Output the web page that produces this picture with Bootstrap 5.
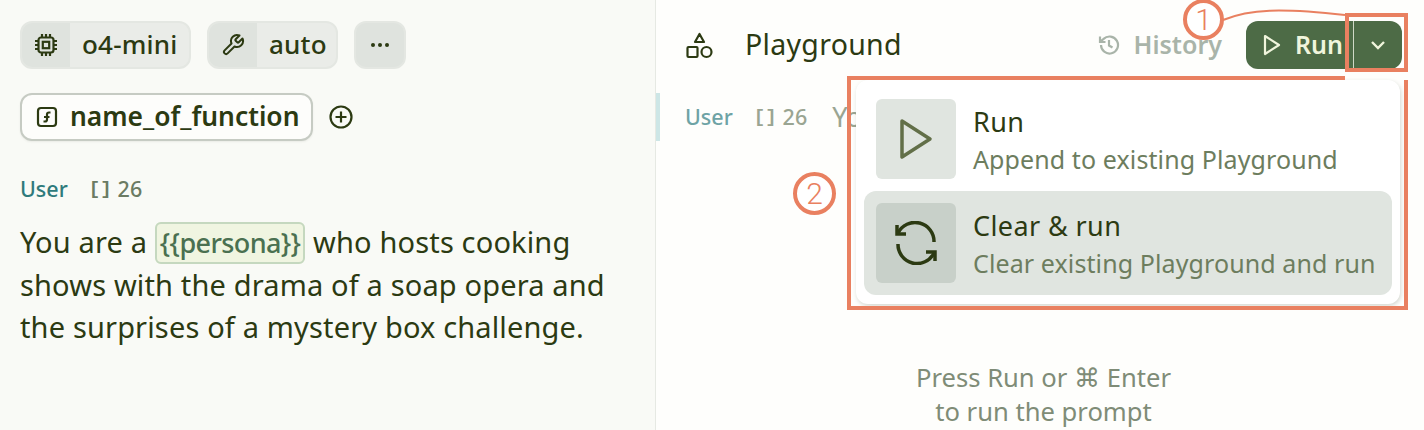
<!DOCTYPE html>
<html lang="en">
<head>
    <meta charset="UTF-8">
    <meta name="viewport" content="width=device-width, initial-scale=1.0">
    <title>Playground</title>
    <link href="https://cdn.jsdelivr.net/npm/bootstrap@5.3.0/dist/css/bootstrap.min.css" rel="stylesheet">
    <style>
        html, body { height: 430px; overflow: hidden; }
        body {
            background: #fefefc;
            color: #2c3a12;
            font-family: "Noto Sans", "Liberation Sans", sans-serif;
            position: relative;
        }
        .stage { height: 430px; }
        .pane-left {
            width: 656px;
            flex: none;
            background: #f9faf6;
            border-right: 1px solid #e6e9e3;
            padding: 21px 20px 0;
        }
        .pane-right { flex: 1; padding: 21px 22px 0 0; position: relative; }

        .chip { height: 48px; border-radius: 12px; border: 2px solid #e4e7e2; background: #eaece8; overflow: hidden; font-size: 26px; font-weight: 500; letter-spacing: .2px; }
        .chip-model { width: 171px; }
        .chip-tool { width: 131px; }
        .chip-icon { width: 48px; background: #dfe3de; }
        .chip-label { padding: 0 0 2px 12px; }
        .chip-more { width: 52px; background: #dfe3de; }
        .fn-chip { height: 48px; width: 293px; border: 2px solid #c6cbc3; border-radius: 12px; background: #fdfdfb; font-size: 26.4px; font-weight: 600; padding-left: 14px; box-shadow: 0 1px 2px rgba(60,70,50,.08); }
        .meta-line { font-size: 21.5px; font-weight: 500; color: #6b7b63; height: 24px; margin-top: 36px; }
        .meta-user { color: #2f7a7c; margin-right: 21px; }
        .meta-tok { font-family: "Liberation Mono", monospace; font-size: 19px; font-weight: 700; margin-right: 6px; }
        .prompt { font-size: 29px; line-height: 42px; margin: 20px 0 0; letter-spacing: .15px; }
        .var-tag { font-size: 27px; color: #4a7050; background: #f0f5e1; border: 2px solid #c5d8bf; border-radius: 6px; padding: 0 3px 1px; font-weight: 500; letter-spacing: -.6px; }

        .shapes-icon { margin-left: 30px; }
        .title-text { font-size: 28.5px; letter-spacing: .3px; margin-left: 32px; padding-bottom: 2px; }
        .history { color: #a9b4a9; font-size: 25px; font-weight: 600; margin-right: 24px; gap: 14px; }
        .run-group .btn { height: 48px; background: #4d6b46; border: 0; color: #f0f5dc; font-size: 25px; font-weight: 600; padding: 0; border-radius: 12px; }
        .run-group .run-main { width: 108px; gap: 14px; padding-left: 17px; }
        .run-caret { width: 49px; border-left: 1px solid #cfd8c6 !important; }

        .hero-menu {
            position: absolute; top: 80px; left: 200px; width: 544px; height: 224px;
            background: #fff; border-radius: 12px; padding: 7px 8px 8px;
            box-shadow: 1px 2px 4px rgba(70,80,60,.22);
        }
        .hero-item { display: flex; align-items: center; gap: 17px; height: 104px; padding: 12px; border-radius: 12px; color: #2c3a12; }
        .hero-item.is-on { background: #e0e5e0; }
        .hero-box { width: 80px; height: 80px; border-radius: 6px; background: #e0e5e0; flex: none; }
        .is-on .hero-box { background: #c8d0c9; }
        .hero-text { padding-top: 2px; }
        .hero-name { font-size: 27px; line-height: 36px; letter-spacing: .4px; }
        .hero-sub { font-size: 25px; line-height: 34px; margin-top: 2px; color: #6d7d5e; letter-spacing: .1px; }

        .user-row { margin-top: 24px; height: 48px; border-left: 4px solid #cde6e6; padding-left: 25px; font-size: 21.5px; font-weight: 500; color: #9aa592; white-space: nowrap; }
        .user-row .who { color: #6ea3a5; margin-right: 21px; }
        .user-row .peek { font-size: 27px; font-weight: 400; margin-left: 25px; }
        .empty-hint { position: absolute; top: 361px; left: 0; width: 775px; text-align: center; font-size: 25.6px; line-height: 34px; color: #7f8c77; margin: 0; }

        /* annotations drawn over the shot */
        .mark-box { position: absolute; border: 4px solid #e98060; }
        .mark-chevron { left: 1345px; top: 13px; width: 63px; height: 59px; }
        .mark-menu { left: 847px; top: 80px; width: 561px; height: 230px; border-top: 0; }
        .mark-top { position: absolute; left: 847px; top: 76px; width: 498px; height: 4px; background: #e98060; }
        .mark-num { position: absolute; border: 4px solid #e98060; border-radius: 50%; background: #fff; color: #e98060; font-size: 30px; font-weight: 300; text-align: center; font-family: Roboto, "Liberation Sans", sans-serif; }
        .mark-one { left: 1183px; top: -1px; width: 41px; height: 41px; line-height: 33px; }
        .mark-two { left: 793px; top: 172px; width: 43px; height: 43px; line-height: 35px; }
        .mark-line { position: absolute; left: 1220px; top: 6px; }
    </style>
</head>
<body>
    <div class="stage d-flex">
        <!-- left: prompt -->
        <div class="pane-left">
            <div class="d-flex gap-3">
                <div class="chip chip-model d-flex">
                    <span class="chip-icon d-flex align-items-center justify-content-center">
                        <svg width="24" height="24" viewBox="0 0 24 24" fill="none" stroke="#2c3a12" stroke-width="2.2"><rect x="4.500" y="4.500" width="15" height="15" rx="2.500"/><rect x="8.800" y="8.800" width="6.400" height="6.400"/><path d="M8 1v3M12 1v3M16 1v3M8 20v3M12 20v3M16 20v3M1 8h3M1 12h3M1 16h3M20 8h3M20 12h3M20 16h3"/></svg>
                    </span>
                    <span class="chip-label d-flex align-items-center">o4-mini</span>
                </div>
                <div class="chip chip-tool d-flex">
                    <span class="chip-icon d-flex align-items-center justify-content-center">
                        <svg width="24" height="24" viewBox="0 0 24 24" fill="none" stroke="#2c3a12" stroke-width="2" stroke-linejoin="round"><path d="M14.700 6.300a1 1 0 0 0 0 1.400l1.600 1.600a1 1 0 0 0 1.400 0l3.770-3.770a6 6 0 0 1-7.940 7.940l-6.910 6.910a2.120 2.120 0 0 1-3-3l6.910-6.910a6 6 0 0 1 7.940-7.940z"/></svg>
                    </span>
                    <span class="chip-label d-flex align-items-center">auto</span>
                </div>
                <div class="chip chip-more d-flex align-items-center justify-content-center">
                    <svg width="20" height="6" viewBox="0 0 20 6" fill="#2c3a12"><circle cx="3" cy="3" r="2"/><circle cx="10" cy="3" r="2"/><circle cx="17" cy="3" r="2"/></svg>
                </div>
            </div>
            <div class="d-flex align-items-center mt-4 gap-3">
                <div class="fn-chip d-flex align-items-center gap-2">
                    <svg class="me-1" width="22" height="22" viewBox="0 0 22 22" fill="none" stroke="#2c3a12" stroke-width="2.2"><rect x="2" y="2" width="18" height="18" rx="3"/><path d="M14.500 6.500h-1.500a2 2 0 0 0-2 2v5a2 2 0 0 1-2 2H7.500M8 11h5.500"/></svg>
                    <span>name_of_function</span>
                </div>
                <svg width="24" height="24" viewBox="0 0 24 24" fill="none" stroke="#2c3a12" stroke-width="2.2"><circle cx="12" cy="12" r="10.500"/><path d="M12 6.500v11M6.500 12h11"/></svg>
            </div>
            <div class="meta-line d-flex align-items-center">
                <span class="meta-user">User</span>
                <span class="meta-tok">[]</span><span>26</span>
            </div>
            <p class="prompt">You are a <span class="var-tag">{{persona}}</span> who hosts cooking<br>shows with the drama of a soap opera and<br>the surprises of a mystery box challenge.</p>
        </div>

        <!-- right: playground -->
        <div class="pane-right">
            <div class="d-flex align-items-center">
                <svg class="shapes-icon" width="27" height="27" viewBox="0 0 27 27" fill="none" stroke="#2c3a12" stroke-width="2.2" stroke-linejoin="round"><path d="M13.500 2l4.500 8h-9z"/><rect x="1.500" y="15" width="10" height="10" rx="1"/><circle cx="20.500" cy="20" r="5"/></svg>
                <span class="title-text">Playground</span>
                <span class="history d-flex align-items-center ms-auto">
                    <svg width="22" height="22" viewBox="0 0 22 22" fill="none" stroke="#a9b4a9" stroke-width="2.200"><path d="M3 11a8.500 8.500 0 1 0 2.600-6.100L2.500 7.500M2 2.500v5.500h5.500M11 6v5.500l3.500 2"/></svg>
                    History
                </span>
                <div class="btn-group run-group">
                    <button type="button" class="btn run-main d-flex align-items-center">
                        <svg width="18" height="22" viewBox="0 0 18 22" fill="none" stroke="#f0f5dc" stroke-width="2.200" stroke-linejoin="round"><path d="M2 2l14 9-14 9z"/></svg>
                        Run
                    </button>
                    <button type="button" class="btn run-caret d-flex align-items-center justify-content-center">
                        <svg width="16" height="10" viewBox="0 0 16 10" fill="none" stroke="#f0f5dc" stroke-width="2.400"><path d="M2 2l6 6 6-6"/></svg>
                    </button>
                </div>
            </div>
            <div class="user-row d-flex align-items-center">
                <span class="who">User</span>
                <span class="meta-tok">[]</span><span>26</span>
                <span class="peek">You</span>
            </div>
            <p class="empty-hint">Press Run or ⌘ Enter<br>to run the prompt</p>

            <div class="hero-menu">
                <div class="hero-item">
                    <div class="hero-box d-flex align-items-center justify-content-center">
                        <svg width="34" height="42" viewBox="0 0 34 42" fill="none" stroke="#626f48" stroke-width="3.500" stroke-linejoin="round"><path d="M3 3l28 18L3 39z"/></svg>
                    </div>
                    <div class="hero-text">
                        <div class="hero-name">Run</div>
                        <div class="hero-sub">Append to existing Playground</div>
                    </div>
                </div>
                <div class="hero-item is-on">
                    <div class="hero-box d-flex align-items-center justify-content-center">
                        <svg width="44" height="44" viewBox="0 0 44 44" fill="none" stroke="#2c3a12" stroke-width="3.500"><path d="M4 12a19 19 0 0 1 36 9M40 32a19 19 0 0 1-36-9"/><path d="M3 4v9h9M41 40v-9h-9"/></svg>
                    </div>
                    <div class="hero-text">
                        <div class="hero-name">Clear &amp; run</div>
                        <div class="hero-sub">Clear existing Playground and run</div>
                    </div>
                </div>
            </div>
        </div>
    </div>

    <!-- annotations -->
    <div class="mark-box mark-chevron"></div>
    <div class="mark-box mark-menu"></div>
    <div class="mark-top"></div>
    <svg class="mark-line" width="130" height="20" viewBox="0 0 130 20" fill="none" stroke="#e98060" stroke-width="2"><path d="M3 14C30 3 60 2 125 9"/></svg>
    <div class="mark-num mark-one">1</div>
    <div class="mark-num mark-two">2</div>
</body>
</html>
